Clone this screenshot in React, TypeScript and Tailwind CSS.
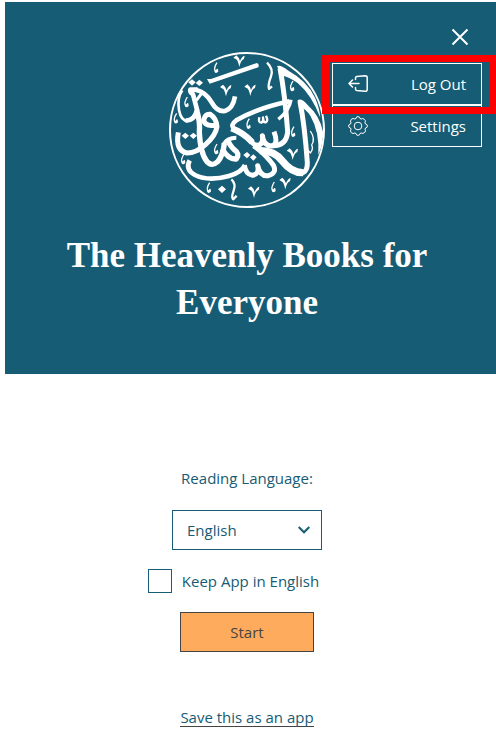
import { useState } from "react";

const chevronMarks = [
  [236, 46], [196, 134], [269, 133], [396, 325], [280, 439], [374, 413],
];

const commaMarks = [
  [168, 70], [79, 173], [47, 222], [396, 125], [265, 238],
  [399, 262], [168, 314], [69, 344], [146, 430], [340, 428],
];

function Emblem() {
  return (
    <svg
      viewBox="26 21 468 468"
      className="size-39"
      fill="none"
      stroke="#fff"
      strokeLinejoin="round"
      role="img"
      aria-label="Calligraphy emblem"
    >
      <circle cx="260" cy="255" r="231" strokeWidth="6" />
      {/* upper left word */}
      <path fill="#fff" stroke="none" d="M140 102 L152 102 L290 54 Q298 58 294 67 L148 116 Z" />
      <path strokeWidth="8" d="M66 136 Q50 156 56 195 Q62 228 82 228" />
      <path strokeWidth="14" d="M76 227 Q104 226 110 194 Q104 170 98 148 Q88 142 90 134 L112 134" />
      <path strokeWidth="14" d="M106 134 Q138 142 154 172 Q170 201 194 198 Q218 190 224 154" />
      <path strokeWidth="9" d="M126 142 L108 166" />
      <path fill="#fff" stroke="none" d="M84 112 L95 103 L106 112 L95 122 Z M106 114 L117 104 L128 113 L117 123 Z" />
      <path strokeWidth="15" d="M168 240 Q134 246 130 226 Q134 206 150 208 Q168 220 170 245 Q166 272 136 298 Q108 324 80 324 Q44 316 54 262" />
      <path fill="#fff" stroke="none" d="M64 272 L75 263 L86 272 L75 282 Z M88 272 L99 263 L110 272 L99 282 Z" />
      {/* tall stroke and middle letters */}
      <path strokeWidth="16" d="M109 195 Q120 230 117 262 Q120 325 140 350 Q155 366 172 350 Q188 332 192 296" />
      <path strokeWidth="16" d="M186 312 Q204 344 228 342 Q240 326 222 314 Q206 300 202 282" />
      <path strokeWidth="12" d="M188 300 Q200 278 228 278" />
      <path strokeWidth="19" d="M213 250 Q248 262 276 292" />
      <path strokeWidth="14" d="M222 252 Q208 240 228 226 Q290 190 387 169" />
      <path strokeWidth="10" d="M392 164 Q388 195 354 223" />
      <path strokeWidth="15" d="M268 282 Q278 302 294 301 Q310 296 306 272 Q310 302 332 303 Q356 300 341 260" />
      <path strokeWidth="15" d="M334 302 Q378 304 382 260 Q374 150 359 70" />
      <path fill="#fff" stroke="none" d="M350 64 Q360 58 382 76 Q440 108 464 158 Q478 190 480 218 Q454 150 412 114 Q384 94 366 92 Z" />
      {/* lower word */}
      <path strokeWidth="14" d="M88 346 Q74 374 104 390 Q144 410 206 393 Q244 382 254 360" />
      <path strokeWidth="15" d="M252 360 Q256 388 276 391 Q298 388 292 362 Q300 396 324 392 Q350 384 340 362 Q320 332 280 302" />
      <path strokeWidth="22" d="M298 317 Q342 316 366 348 Q394 384 428 383" />
      <path strokeWidth="15" d="M406 383 Q442 392 441 352 Q433 240 419 170" />
      <path fill="#fff" stroke="none" d="M411 168 Q420 155 442 180 Q478 212 488 260 Q490 294 474 330 Q478 260 450 212 Q436 192 424 189 Z" />
      <path strokeWidth="4" d="M450 258 Q466 282 454 300 Q460 312 450 324 L442 314" />
      <path fill="#fff" stroke="none" d="M173 433 L185 422 L197 433 L185 444 Z M249 330 L260 321 L270 330 L260 340 Z M269 337 L279 328 L289 337 L279 347 Z" />
      {/* vowel marks */}
      <path strokeWidth="7" d="M297 217 Q293 233 303 233 Q310 230 308 217 Q309 234 316 232 Q325 228 317 212" />
      <path strokeWidth="7" d="M320 53 Q340 72 332 94 Q322 120 326 132 L335 124" />
      <path strokeWidth="7" d="M213 403 Q228 416 220 437 Q212 458 219 463 L229 452" />
      {chevronMarks.map(([x, y]) => (
        <path
          key={`${x}-${y}`}
          transform={`translate(${x} ${y})`}
          fill="#fff"
          stroke="none"
          d="M-17 -8 L-8 -15 Q1 -8 3 2 Q8 -12 17 -14 L15 -4 Q6 -2 1 20 Q-4 -2 -9 -3 Z"
        />
      ))}
      {commaMarks.map(([x, y]) => (
        <path
          key={`${x}-${y}`}
          transform={`translate(${x} ${y})`}
          strokeWidth="4"
          d="M2 -17 Q-8 -2 -4 8 Q-2 15 4 9 L3 3 L-3 10"
        />
      ))}
    </svg>
  );
}

function LogOutIcon() {
  return (
    <svg viewBox="0 0 20 20" className="size-5" fill="none" stroke="currentColor" strokeWidth="1.5" strokeLinecap="round" strokeLinejoin="round" aria-hidden="true">
      <path d="M1 9.500H11M4.500 6L1 9.500L4.500 13" />
      <path d="M7.500 5.500V4Q7.500 2.800 8.700 2.600L17 1.800Q19.200 1.800 19.200 3.500V15.500Q19.200 17.500 17 17.300L8.700 16.400Q7.500 16.200 7.500 15V13.500" />
    </svg>
  );
}

function GearIcon() {
  return (
    <svg viewBox="0 0 20 20" className="size-5" fill="none" stroke="currentColor" strokeLinejoin="round" aria-hidden="true">
      <circle cx="10" cy="10" r="3.800" />
      <path d="M10 .6 Q11.800 .6 12 2.500 L13.200 3 Q14.700 1.800 16 3.100 Q18.200 4.500 17 6.800 L17.500 8 Q19.400 8.200 19.400 10 Q19.400 11.800 17.500 12 L17 13.200 Q18.200 15 16.800 16.300 Q15 18.200 13.200 17 L12 17.500 Q11.800 19.400 10 19.400 Q8.200 19.400 8 17.500 L6.800 17 Q5 18.200 3.300 16.700 Q1.800 15 3 13.200 L2.500 12 Q.6 11.800 .6 10 Q.6 8.200 2.500 8 L3 6.800 Q1.800 5 3.300 3.300 Q5 1.800 6.800 3 L8 2.500 Q8.200 .6 10 .6 Z" />
    </svg>
  );
}

const menuItem =
  "flex h-[42px] w-full items-center justify-between border border-white px-[15px] text-white";

export default function App() {
  const [keepEnglish, setKeepEnglish] = useState(false);

  return (
    <div className="pt-[2px] pl-[5px] font-['Open_Sans',sans-serif] text-[15px] leading-5 text-[#165c74]">
      <header className="relative flex flex-col items-center bg-[#165c74] pt-[50px] pr-[7px] pb-[48px] text-white">
        <Emblem />
        <h1 className="mt-6 max-w-96 text-center font-['Liberation_Serif',serif] text-[35px] leading-[47px] font-bold">
          The Heavenly Books for Everyone
        </h1>

        <div className="absolute top-[25px] right-[14px] flex w-[150px] flex-col items-end">
          <button type="button" aria-label="Close menu" className="mr-[13px] flex size-[19px] items-center justify-center">
            <svg viewBox="0 0 18 18" className="size-[18px]" fill="none" stroke="currentColor" strokeWidth="2" aria-hidden="true">
              <path d="M1.500 1.500L16.500 16.500M16.500 1.500L1.500 16.500" />
            </svg>
          </button>
          <nav className="mt-[17px] w-full">
            <button type="button" className={menuItem}>
              <LogOutIcon />
              Log Out
            </button>
            <button type="button" className={menuItem}>
              <GearIcon />
              Settings
            </button>
          </nav>
        </div>
        <div className="pointer-events-none absolute top-[53px] right-0 h-[59px] w-[174px] border-[7px] border-[#ff0000]" />
      </header>

      <main className="flex flex-col items-center pt-[94px] pr-[7px]">
        <label htmlFor="language">Reading Language:</label>
        <div className="relative mt-[22px] w-[150px]">
          <select
            id="language"
            defaultValue="English"
            className="h-10 w-full appearance-none rounded-none border border-[#165c74] bg-white px-[14px]"
          >
            <option>English</option>
          </select>
          <svg viewBox="0 0 12 8" className="pointer-events-none absolute top-4 right-3 h-2 w-3" fill="none" stroke="currentColor" strokeWidth="2" aria-hidden="true">
            <path d="M.7 1L6 6.300L11.300 1" />
          </svg>
        </div>
        <label className="mt-[19px] mr-[27px] flex items-center gap-[10px]">
          <input
            type="checkbox"
            checked={keepEnglish}
            onChange={(event) => setKeepEnglish(event.target.checked)}
            className="size-6 appearance-none border border-[#165c74] checked:bg-[#165c74]"
          />
          Keep App in English
        </label>
        <button type="button" className="mt-[19px] h-10 w-[134px] border border-[#444] bg-[#ffab5e] text-[#444]">
          Start
        </button>
        <a href="#save" className="mt-14 border-b border-[#444] leading-[18px]">
          Save this as an app
        </a>
      </main>
    </div>
  );
}
